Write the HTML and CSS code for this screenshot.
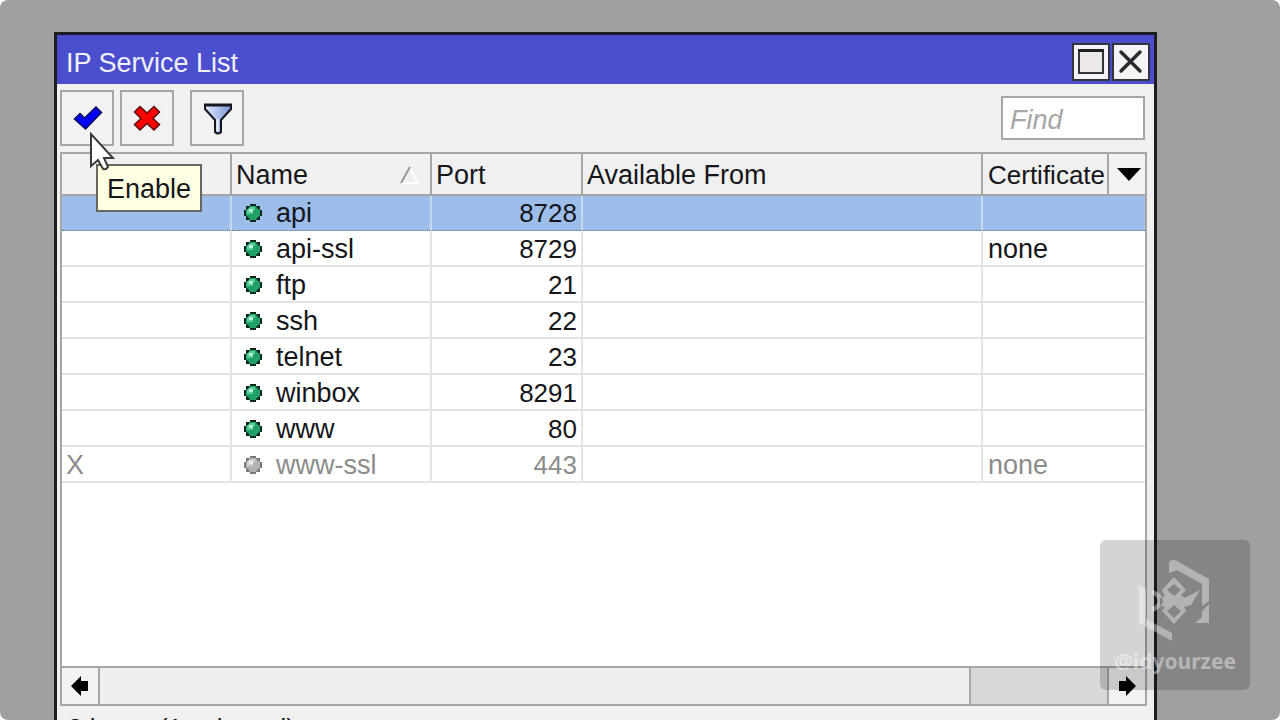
FILE: index.html
```html
<!DOCTYPE html>
<html lang="en">
<head>
<meta charset="utf-8">
<title>IP Service List</title>
<link rel="stylesheet" href="styles.css">
</head>
<body>
<svg class="defs" aria-hidden="true">
  <defs>
    <g id="ball">
      <path class="ball-edge" d="M6 0h6v2h4v4h2v6h-2v4h-4v2H6v-2H2v-4H0V6h2V2h4z"/>
      <path class="ball-body" d="M6 2h6l1 2 1 1 2 1v6l-2 1-1 1-1 2H6l-1-2-1-1-2-1V6l2-1 1-1z"/>
      <path class="ball-light" d="M6 3h5v3H9v4H3V6z"/>
      <path class="ball-shine" d="M5 5h4v3H5z"/>
    </g>
  </defs>
</svg>
<main class="desktop">
  <section class="window">
    <header class="titlebar">
      <h1 class="title">IP Service List</h1>
      <button class="win-btn" aria-label="Maximize"><svg width="34" height="34" viewBox="0 0 34 34"><path d="M5 5h24v23H5z" fill="#ece8ec" stroke="#34343a" stroke-width="2"/><path d="M4 5.500h26" stroke="#222" stroke-width="3"/></svg></button>
      <button class="win-btn" aria-label="Close"><svg width="34" height="34" viewBox="0 0 34 34"><path d="M7 7l19 19M26 7L7 26" fill="none" stroke="#2c2a2e" stroke-width="3.500" stroke-linecap="round"/></svg></button>
    </header>
    <div class="toolbar">
      <button class="tool" aria-label="Enable" aria-describedby="tip"><svg width="50" height="52" viewBox="0 0 50 52"><path d="M12.500 27l5.500-5.500 4.500 4.500L34 15l5.500 5.500L23.500 37z" fill="#00f" stroke="#0a0a50" stroke-width="1.500"/></svg></button>
      <button class="tool" aria-label="Disable"><svg width="50" height="52" viewBox="0 0 50 52"><path d="M18 14.500l7 6.500 7-6.500 5.500 5.500-6.500 6.500 6.500 6-5.500 5.500-7-6.500-7 6.500-5.500-5.500 6.500-6-6.500-6.500z" fill="#f00" stroke="#5c0808" stroke-width="1.500"/></svg></button>
      <button class="tool tool-filter" aria-label="Filter"><svg width="50" height="52" viewBox="0 0 50 52"><defs><linearGradient id="fg"><stop offset="0" stop-color="#e4ecff"/><stop offset="1" stop-color="#7894d4"/></linearGradient></defs><path d="M13 13h26v4L29 28v12q-3 3-6 0V28L13 17z" fill="url(#fg)" stroke="#16181e" stroke-width="2"/><path d="M25.500 27v12" stroke="#edf4ff" stroke-width="2"/><path d="M12 13h28" stroke="#16181e" stroke-width="3"/></svg></button>
      <input class="find" type="text" placeholder="Find" aria-label="Find">
    </div>
    <div class="list">
      <div class="list-body">
        <table class="services">
          <colgroup><col class="c-flag"><col class="c-name"><col class="c-port"><col><col class="c-cert"><col class="c-menu"></colgroup>
          <thead>
            <tr>
              <th aria-label="Flags"></th>
              <th><span class="sortable">Name <svg width="20" height="20" viewBox="0 0 20 20"><path d="M9 2l9 16H1" fill="none" stroke="#fff" stroke-width="2"/><path d="M10 2L1 18" stroke="#969696" stroke-width="2"/></svg></span></th>
              <th>Port</th>
              <th>Available From</th>
              <th class="cert">Certificate</th>
              <th class="menu-cell"><button class="menu" aria-label="Columns"><svg width="24" height="13" viewBox="0 0 24 13"><path d="M0 0h24L12 13z"/></svg></button></th>
            </tr>
          </thead>
          <tbody>
            <tr class="selected"><td></td><td><span class="name"><svg class="ball" width="18" height="18"><use href="#ball"/></svg>api</span></td><td class="num">8728</td><td></td><td class="cert-value" colspan="2"></td></tr>
            <tr><td></td><td><span class="name"><svg class="ball" width="18" height="18"><use href="#ball"/></svg>api-ssl</span></td><td class="num">8729</td><td></td><td class="cert-value" colspan="2">none</td></tr>
            <tr><td></td><td><span class="name"><svg class="ball" width="18" height="18"><use href="#ball"/></svg>ftp</span></td><td class="num">21</td><td></td><td class="cert-value" colspan="2"></td></tr>
            <tr><td></td><td><span class="name"><svg class="ball" width="18" height="18"><use href="#ball"/></svg>ssh</span></td><td class="num">22</td><td></td><td class="cert-value" colspan="2"></td></tr>
            <tr><td></td><td><span class="name"><svg class="ball" width="18" height="18"><use href="#ball"/></svg>telnet</span></td><td class="num">23</td><td></td><td class="cert-value" colspan="2"></td></tr>
            <tr><td></td><td><span class="name"><svg class="ball" width="18" height="18"><use href="#ball"/></svg>winbox</span></td><td class="num">8291</td><td></td><td class="cert-value" colspan="2"></td></tr>
            <tr><td></td><td><span class="name"><svg class="ball" width="18" height="18"><use href="#ball"/></svg>www</span></td><td class="num">80</td><td></td><td class="cert-value" colspan="2"></td></tr>
            <tr class="disabled"><td>X</td><td><span class="name"><svg class="ball" width="18" height="18"><use href="#ball"/></svg>www-ssl</span></td><td class="num">443</td><td></td><td class="cert-value" colspan="2">none</td></tr>
          </tbody>
        </table>
      </div>
      <div class="scrollbar">
        <button class="scroll-btn" aria-label="Scroll left"><svg width="18" height="20" viewBox="0 0 18 20"><path d="M0 10L10 0v5h7v10h-7v5z"/></svg></button>
        <div class="track"><div class="thumb"></div></div>
        <button class="scroll-btn" aria-label="Scroll right"><svg width="18" height="20" viewBox="0 0 18 20"><path d="M18 10L8 0v5H1v10h7v5z"/></svg></button>
      </div>
    </div>
    <footer class="status">8 items (1 selected)</footer>
    <div class="tooltip" id="tip" role="tooltip">Enable</div>
    <svg class="pointer" width="26" height="40" viewBox="0 0 26 40"><path d="M2 2v32l7-6 5 9q3 1 5-2l-4-9h9z" fill="#fff" stroke="#3a3a3a" stroke-width="2"/></svg>
  </section>
  <aside class="badge">
    <svg width="76" height="84" viewBox="0 0 76 84" fill="#fff"><path fill-rule="evenodd" d="M32 4q2-4 6-3l34 19v22l-7 5V25L40 11l-8 3zM65 52l7-7v19H58l7-6zM2 26l7 4v30l26 14v8L2 64zM15 31q10 2 11 11-1 7-10 11l-2-5q6-1 7-6-1-5-6-7zM37 18l12 13-5 5 4 3 15-8-9 15-7 2 2 4-12 13-12-13 3-4-5-2v-7l5-2-3-6zM37 25l-7 6 7 6 7-6zM37 46l-7 6 7 7 7-7z"/></svg>
    <span class="handle">@idyourzee</span>
  </aside>
</main>
</body>
</html>
```
FILE: styles.css
```css
* { box-sizing: border-box; }
body {
  margin: 0;
  background: #fff;
  color: #16161a;
  font-family: "Liberation Sans", Arial, sans-serif;
  font-size: 27px;
  line-height: 32px;
}
button, input { font: inherit; padding: 0; border-radius: 0; }
button { display: grid; place-items: center; background: #f2f2f2; }
svg { display: block; }
.defs { position: absolute; width: 0; height: 0; }
.desktop {
  position: relative;
  display: flex;
  height: 100vh;
  overflow: hidden;
  padding: 32px 123px 0 54px;
  border-radius: 8px;
  background: #a0a0a0;
}
.window {
  position: relative;
  flex: 1 0 0;
  display: flex;
  flex-direction: column;
  margin-bottom: -32px;
  border: 3px solid #1c1c22;
  background: #f0f0f0;
}
.titlebar {
  display: flex;
  align-items: center;
  gap: 2px;
  height: 49px;
  padding: 4px 4px 0 9px;
  background: #4c4fcd;
}
.title {
  flex: 1;
  margin: 0;
  padding-top: 2px;
  font-size: 27px;
  font-weight: normal;
  color: #f0f0ff;
}
.win-btn {
  width: 38px;
  height: 38px;
  border: 2px solid #34343c;
  background: #f5f3f5;
}
.toolbar {
  display: flex;
  align-items: center;
  gap: 6px;
  height: 68px;
  padding: 0 9px 0 3px;
}
.tool {
  width: 54px;
  height: 56px;
  border: 2px solid #a6a6a6;
}
.tool-filter { margin-left: 10px; }
.find {
  width: 144px;
  height: 44px;
  margin-left: auto;
  padding: 4px 0 0 7px;
  border: 2px solid #a6a6a6;
  background: #fff;
}
.find::placeholder { color: #a6a6a6; font-style: italic; opacity: 1; }
.list {
  flex: 1;
  display: flex;
  flex-direction: column;
  margin: 0 7px 0 3px;
  border: 2px solid #a6a6a6;
  background: #fff;
}
.list-body { flex: 1; }
.services {
  width: 100%;
  table-layout: fixed;
  border-spacing: 0;
}
.c-flag { width: 170px; }
.c-name { width: 200px; }
.c-port { width: 151px; }
.c-cert { width: 126px; }
.c-menu { width: 36px; }
th, td {
  padding: 0 4px;
  text-align: left;
  white-space: nowrap;
}
th {
  height: 42px;
  padding-top: 2px;
  border-right: 2px solid #a6a6a6;
  border-bottom: 2px solid #a6a6a6;
  background: #f0f0f0;
  font-weight: normal;
}
th:last-child, td:last-child { border-right: 0; }
.cert { font-size: 26px; }
.cert, .cert-value { padding-left: 5px; }
.menu-cell { padding: 0; }
.menu { width: 100%; height: 40px; border: 0; }
.menu svg { margin-left: 4px; }
.sortable { display: flex; justify-content: space-between; align-items: center; padding-right: 6px; }
td {
  height: 36px;
  padding-top: 2px;
  border-right: 2px solid #e4e4e4;
  border-bottom: 2px solid #e4e4e4;
}
.num { font-size: 26px; text-align: right; }
.name { display: flex; align-items: center; gap: 14px; padding-left: 8px; }
.selected td {
  height: 35px;
  padding-top: 0;
  border-right-color: #c6d8ec;
  border-bottom: 1px dotted #66717e;
  background: #9dbeea;
}
.disabled { color: #8c8c8c; }
.ball-edge { fill: #0c281c; }
.ball-body { fill: #20a068; }
.ball-light { fill: #58cc98; }
.ball-shine { fill: #b8f4d8; }
.disabled .ball { opacity: 0.6; filter: grayscale(1); }
.scrollbar {
  display: flex;
  height: 38px;
  border-top: 2px solid #a6a6a6;
}
.scroll-btn { width: 36px; border: 0; }
.track {
  flex: 1;
  border: solid #a6a6a6;
  border-width: 0 2px;
  background: #d8d8d8;
}
.thumb {
  width: 86.500%;
  height: 100%;
  border-right: 2px solid #a6a6a6;
  background: #efefef;
}
.status { height: 43px; padding: 6px 11px 0; font-size: 26px; }
.tooltip {
  position: absolute;
  left: 39px;
  top: 129px;
  padding: 7px 9px 5px;
  border: 2px solid #68685e;
  background: #ffffe1;
}
.pointer { position: absolute; left: 32px; top: 97px; }
.badge {
  position: absolute;
  right: 30px;
  bottom: 30px;
  display: flex;
  flex-direction: column;
  align-items: center;
  gap: 3px;
  width: 150px;
  height: 150px;
  padding-top: 19px;
  border-radius: 6px;
  background: rgb(0 0 0 / 17%);
}
.badge svg { opacity: 0.38; }
.handle {
  font: bold 21px/30px "Noto Sans", sans-serif;
  color: rgb(255 255 255 / 42%);
}
```
